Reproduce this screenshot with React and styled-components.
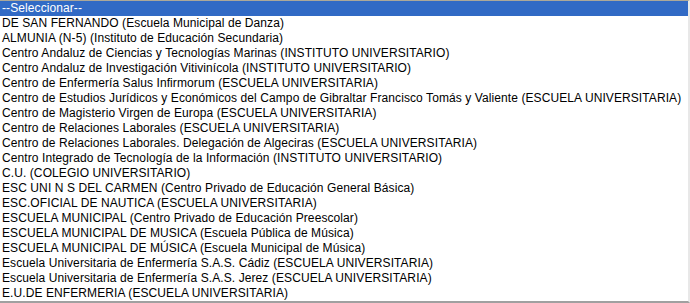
import React from "react";
import styled, { createGlobalStyle } from "styled-components";

const Global = createGlobalStyle`
  html, body { margin: 0; padding: 0; background: #fff; }
  body { width: 690px; height: 303px; overflow: hidden; }
`;

const ListBox = styled.div`
  box-sizing: border-box;
  width: 690px;
  height: 303px;
  border-top: 1px solid #aca899;
  border-right: 2px solid #e8e8e8;
  border-bottom: 2px solid #a0a0a0;
  display: flex;
  flex-direction: column;
  overflow: hidden;
  background: #fff;
  font-family: "Liberation Sans", Arial, sans-serif;
  font-size: 12px;
  letter-spacing: 0.09px;
`;

const Option = styled.div`
  height: 15px;
  line-height: 15px;
  padding-left: 2px;
  white-space: nowrap;
  color: ${(p) => (p.$selected ? "#fff" : "#000")};
  background: ${(p) => (p.$selected ? "#316ac5" : "transparent")};
`;

const items = [
  "--Seleccionar--",
  "DE SAN FERNANDO (Escuela Municipal de Danza)",
  "ALMUNIA (N-5) (Instituto de Educación Secundaria)",
  "Centro Andaluz de Ciencias y Tecnologías Marinas (INSTITUTO UNIVERSITARIO)",
  "Centro Andaluz de Investigación Vitivinícola (INSTITUTO UNIVERSITARIO)",
  "Centro de Enfermería Salus Infirmorum (ESCUELA UNIVERSITARIA)",
  "Centro de Estudios Jurídicos y Económicos del Campo de Gibraltar Francisco Tomás y Valiente (ESCUELA UNIVERSITARIA)",
  "Centro de Magisterio Virgen de Europa (ESCUELA UNIVERSITARIA)",
  "Centro de Relaciones Laborales (ESCUELA UNIVERSITARIA)",
  "Centro de Relaciones Laborales. Delegación de Algeciras (ESCUELA UNIVERSITARIA)",
  "Centro Integrado de Tecnología de la Información (INSTITUTO UNIVERSITARIO)",
  "C.U. (COLEGIO UNIVERSITARIO)",
  "ESC UNI N S DEL CARMEN (Centro Privado de Educación General Básica)",
  "ESC.OFICIAL DE NAUTICA (ESCUELA UNIVERSITARIA)",
  "ESCUELA MUNICIPAL (Centro Privado de Educación Preescolar)",
  "ESCUELA MUNICIPAL DE MUSICA (Escuela Pública de Música)",
  "ESCUELA MUNICIPAL DE MÚSICA (Escuela Municipal de Música)",
  "Escuela Universitaria de Enfermería S.A.S. Cádiz (ESCUELA UNIVERSITARIA)",
  "Escuela Universitaria de Enfermería S.A.S. Jerez (ESCUELA UNIVERSITARIA)",
  "E.U.DE ENFERMERIA (ESCUELA UNIVERSITARIA)",
];

export default function App() {
  return (
    <>
      <Global />
      <ListBox>
        {items.map((t, i) => (
          <Option key={i} $selected={i === 0}>
            {t}
          </Option>
        ))}
      </ListBox>
    </>
  );
}
